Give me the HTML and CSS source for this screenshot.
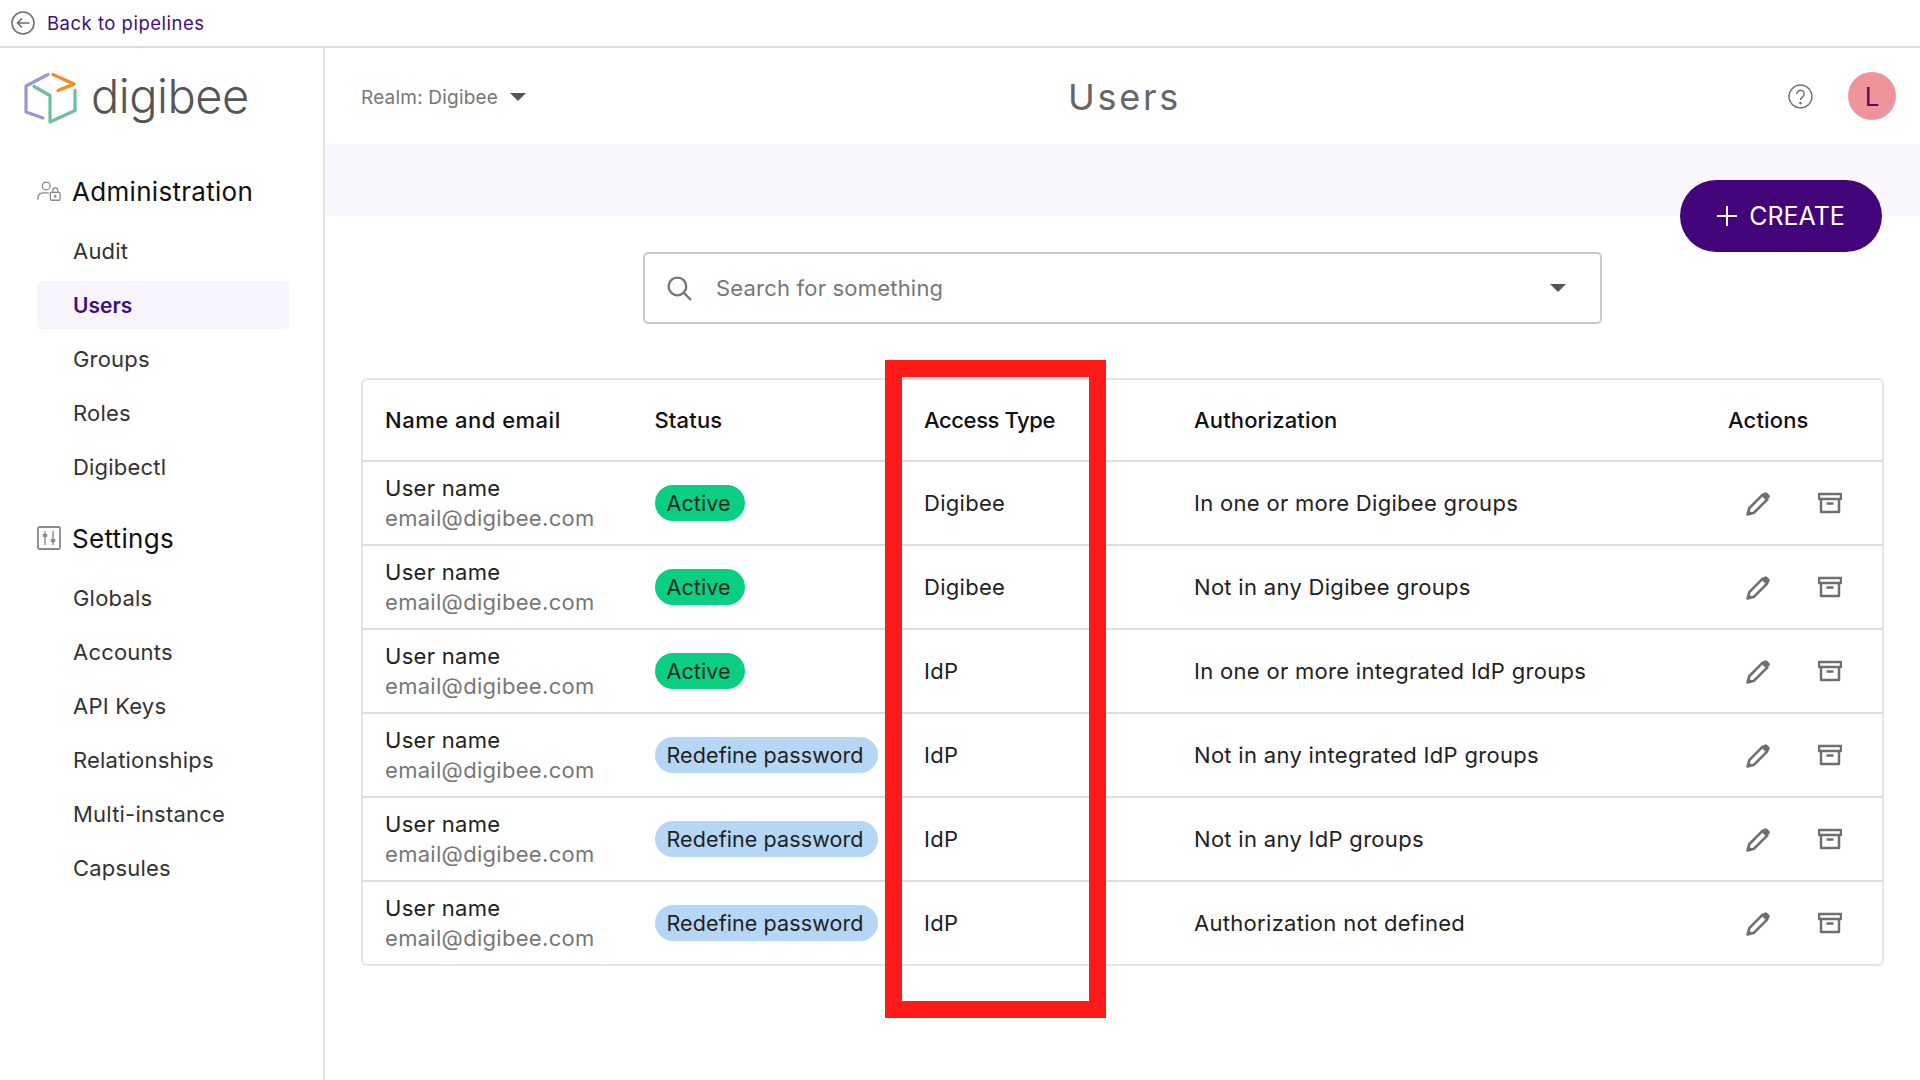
FILE: index.html
```html
<!DOCTYPE html>
<html lang="en">
<head>
  <meta charset="UTF-8" />
  <title>Users - Digibee</title>
  <link rel="stylesheet" href="styles.css">
</head>
<body>
  <div class="topbar">
    <svg class="back-icon" viewBox="0 0 24 24" width="24" height="24" fill="none" stroke="#6f6f6f" stroke-width="1.600"><circle cx="12" cy="12" r="11"/><path d="M18.500 12H6.500M11 7.500L6.500 12l4.500 4.500"/></svg>
    <a class="back-link" href="#">Back to pipelines</a>
  </div>
  <div class="app">
    <aside class="sidebar">
      <div class="logo">
        <svg viewBox="24 72 54 54" width="54" height="54" fill="none" stroke-width="3.200" stroke-linecap="round" stroke-linejoin="round">
          <path d="M48 75.500L26 87v26l17 6" stroke="#9c97d3"/>
          <path d="M53 75.500L74 85l-16 6.500" stroke="#f58a1f"/>
          <path d="M34 87.500L50 96.500V123l25-11.500V91" stroke="#6fc09a"/>
        </svg>
        <span class="logo-text">digibee</span>
      </div>
      <div class="nav-heading">
        <svg viewBox="0 0 26 22" width="24" height="22" fill="none" stroke="#8a8a8a" stroke-width="1.400"><circle cx="10" cy="5.500" r="4.200"/><path d="M1 20.500v-2.500c0-3 3-5 6-5h6"/><rect x="14.500" y="12.500" width="10.500" height="8.500" rx="1"/><path d="M17 12.500v-2a2.800 2.800 0 0 1 5.600 0v2"/><circle cx="19.800" cy="16.800" r=".8" fill="#8a8a8a"/></svg>
        <span>Administration</span>
      </div>
      <nav class="nav-list">
        <a href="#">Audit</a>
        <a href="#" class="active">Users</a>
        <a href="#">Groups</a>
        <a href="#">Roles</a>
        <a href="#">Digibectl</a>
      </nav>
      <div class="nav-heading">
        <svg viewBox="0 0 24 24" width="24" height="24" fill="none" stroke="#8a8a8a" stroke-width="1.800"><rect x="1" y="1" width="22" height="22" rx="1.500"/><path d="M8 5v14M16 5v14" stroke-width="1.400"/><rect x="5.800" y="8" width="4.400" height="3" fill="#8a8a8a" stroke="none"/><rect x="13.800" y="13" width="4.400" height="3" fill="#8a8a8a" stroke="none"/></svg>
        <span>Settings</span>
      </div>
      <nav class="nav-list">
        <a href="#">Globals</a>
        <a href="#">Accounts</a>
        <a href="#">API Keys</a>
        <a href="#">Relationships</a>
        <a href="#">Multi-instance</a>
        <a href="#">Capsules</a>
      </nav>
    </aside>
    <main class="content">
      <header class="page-header">
        <div class="realm">Realm: Digibee <span class="caret"></span></div>
        <h1>Users</h1>
        <div class="header-right">
          <svg viewBox="0 0 24 24" width="25" height="25" fill="none" stroke="#6f6f6f" stroke-width="1.400"><circle cx="12" cy="12" r="11"/><path d="M8.500 9.500a3.500 3.500 0 1 1 5.500 2.900c-1.300.9-2 1.500-2 3"/><circle cx="12" cy="18.300" r=".6" fill="#6f6f6f"/></svg>
          <div class="avatar">L</div>
        </div>
      </header>
      <div class="band"></div>
      <button class="create-btn" type="button">
        <svg viewBox="0 0 20 20" width="20" height="20" stroke="#fff" stroke-width="2"><path d="M10 0v20M0 10h20"/></svg>
        CREATE
      </button>
      <div class="search">
        <svg viewBox="0 0 24 24" width="25" height="25" fill="none" stroke="#777" stroke-width="2.200"><circle cx="10" cy="10" r="8.500"/><path d="M16.200 16.200L23 23"/></svg>
        <span class="search-text">Search for something</span>
        <span class="caret"></span>
      </div>
      <div class="users-table">
        <div class="row head">
          <div class="head-name">Name and email</div><div>Status</div><div class="head-access">Access Type</div><div>Authorization</div><div>Actions</div>
        </div>
        <div class="row">
          <div class="user"><span>User name</span><span class="email">email@digibee.com</span></div>
          <div><span class="badge green">Active</span></div>
          <div>Digibee</div>
          <div>In one or more Digibee groups</div>
          <div class="actions">
            <svg class="icon-edit" viewBox="0 0 24 24"><use href="#pencil"/></svg>
            <svg class="icon-archive" viewBox="0 0 24 24"><use href="#archive"/></svg>
          </div>
        </div>
        <div class="row">
          <div class="user"><span>User name</span><span class="email">email@digibee.com</span></div>
          <div><span class="badge green">Active</span></div>
          <div>Digibee</div>
          <div>Not in any Digibee groups</div>
          <div class="actions">
            <svg class="icon-edit" viewBox="0 0 24 24"><use href="#pencil"/></svg>
            <svg class="icon-archive" viewBox="0 0 24 24"><use href="#archive"/></svg>
          </div>
        </div>
        <div class="row">
          <div class="user"><span>User name</span><span class="email">email@digibee.com</span></div>
          <div><span class="badge green">Active</span></div>
          <div>IdP</div>
          <div>In one or more integrated IdP groups</div>
          <div class="actions">
            <svg class="icon-edit" viewBox="0 0 24 24"><use href="#pencil"/></svg>
            <svg class="icon-archive" viewBox="0 0 24 24"><use href="#archive"/></svg>
          </div>
        </div>
        <div class="row">
          <div class="user"><span>User name</span><span class="email">email@digibee.com</span></div>
          <div><span class="badge blue">Redefine password</span></div>
          <div>IdP</div>
          <div>Not in any integrated IdP groups</div>
          <div class="actions">
            <svg class="icon-edit" viewBox="0 0 24 24"><use href="#pencil"/></svg>
            <svg class="icon-archive" viewBox="0 0 24 24"><use href="#archive"/></svg>
          </div>
        </div>
        <div class="row">
          <div class="user"><span>User name</span><span class="email">email@digibee.com</span></div>
          <div><span class="badge blue">Redefine password</span></div>
          <div>IdP</div>
          <div>Not in any IdP groups</div>
          <div class="actions">
            <svg class="icon-edit" viewBox="0 0 24 24"><use href="#pencil"/></svg>
            <svg class="icon-archive" viewBox="0 0 24 24"><use href="#archive"/></svg>
          </div>
        </div>
        <div class="row">
          <div class="user"><span>User name</span><span class="email">email@digibee.com</span></div>
          <div><span class="badge blue">Redefine password</span></div>
          <div>IdP</div>
          <div>Authorization not defined</div>
          <div class="actions">
            <svg class="icon-edit" viewBox="0 0 24 24"><use href="#pencil"/></svg>
            <svg class="icon-archive" viewBox="0 0 24 24"><use href="#archive"/></svg>
          </div>
        </div>
      </div>
    </main>
  </div>
  <div class="highlight"></div>
  <svg class="defs" width="0" height="0">
    <symbol id="pencil" viewBox="0 0 24 24">
      <path d="M1.500 22.500l1.700-6L16 3.500l4.500 4.500L7.800 20.800z" fill="none" stroke="#6f6f6f" stroke-width="2.500" stroke-linejoin="round"/>
      <path d="M15 4.500l2.500-2.800c.8-.8 1.800-.8 2.600 0l2.200 2.200c.8.800.8 1.800 0 2.600L19.500 9z" fill="#6f6f6f"/>
      <path d="M1.500 22.500l1-4.500 3.500 3.500z" fill="#6f6f6f"/>
    </symbol>
    <symbol id="archive" viewBox="0 0 24 24">
      <path d="M1 3h22v5H1zM3 8v13h18V8M8.500 12.500h7" fill="none" stroke="#6f6f6f" stroke-width="2.500" stroke-linejoin="round"/>
    </symbol>
  </svg>
</body>
</html>
```

FILE: styles.css
```css
body {
  margin: 0;
  background: #fff;
  font-family: 'Inter', 'Open Sans', sans-serif;
  color: #222;
  min-height: 1080px;
  position: relative;
  overflow: hidden;
}
.defs {
  position: absolute;
}
.topbar {
  height: 46px;
  display: flex;
  align-items: center;
  gap: 12px;
  padding-left: 11px;
  border-bottom: 2px solid #ddd;
}
.back-link {
  color: #430f7c;
  font-size: 18.500px;
  letter-spacing: 0.5px;
  text-decoration: none;
}
.app {
  display: flex;
  min-height: 1032px;
}
.sidebar {
  width: 323px;
  border-right: 2px solid #e3e3e3;
  box-sizing: content-box;
  flex-shrink: 0;
}
.logo {
  display: flex;
  align-items: center;
  gap: 13px;
  height: 54px;
  margin: 23px 0 0 24px;
}
.logo-text {
  font-size: 47px;
  font-weight: 300;
  color: #555;
  letter-spacing: -0.5px;
  margin-bottom: 5px;
}
.nav-heading {
  display: flex;
  align-items: center;
  gap: 11px;
  margin-left: 37px;
  height: 40px;
  font-size: 26px;
  letter-spacing: 0.3px;
  color: #111;
}
.sidebar .logo + .nav-heading {
  margin-top: 46px;
}
.nav-list {
  display: flex;
  flex-direction: column;
  width: 252px;
  margin: 16px 0 21px 37px;
}
.nav-list a {
  height: 48px;
  margin-bottom: 6px;
  padding-left: 36px;
  display: flex;
  align-items: center;
  font-size: 22px;
  letter-spacing: 0.2px;
  color: #333;
  text-decoration: none;
  border-radius: 4px;
}
.nav-list a.active {
  background: #f7f4fd;
  color: #430f7c;
  font-size: 21px;
  font-weight: 600;
  letter-spacing: 0;
}
.content {
  flex: 1;
  min-width: 0;
  position: relative;
}
.page-header {
  height: 96px;
  display: flex;
  align-items: center;
  justify-content: space-between;
  padding: 0 24px 0 36px;
  position: relative;
}
.realm {
  color: #777;
  font-size: 19px;
  letter-spacing: 0.2px;
  display: flex;
  align-items: center;
  gap: 5px;
  padding-top: 2px;
}
.page-header h1 {
  position: absolute;
  left: 4px;
  right: 0;
  margin: 0;
  padding-top: 2px;
  text-align: center;
  font-size: 36px;
  font-weight: 400;
  letter-spacing: 2.700px;
  color: #666;
  pointer-events: none;
}
.header-right {
  display: flex;
  align-items: center;
  gap: 35px;
}
.avatar {
  width: 48px;
  height: 48px;
  border-radius: 50%;
  background: #ee959c;
  color: #5c0a5c;
  font-size: 26px;
  display: flex;
  align-items: center;
  justify-content: center;
}
.caret {
  display: inline-block;
  width: 0;
  height: 0;
  margin-left: 7px;
  border-left: 8px solid transparent;
  border-right: 8px solid transparent;
  border-top: 8px solid #555;
}
.band {
  height: 72px;
  background: #f9f7fd;
}
.create-btn {
  position: absolute;
  top: 132px;
  right: 38px;
  width: 202px;
  height: 72px;
  border: none;
  border-radius: 36px;
  background: #43047a;
  color: #fff;
  font-family: inherit;
  font-size: 25px;
  display: flex;
  align-items: center;
  justify-content: center;
  gap: 12px;
}
.search {
  width: 959px;
  height: 72px;
  box-sizing: border-box;
  margin: 36px 0 54px 318px;
  padding: 0 34px 0 22px;
  display: flex;
  align-items: center;
  border: 2px solid #c9c9c9;
  border-radius: 5px;
  color: #777;
  font-size: 22px;
  letter-spacing: 0.2px;
}
.search-text {
  flex: 1;
  margin-left: 24px;
}
.users-table {
  margin: 0 36px;
  border: 2px solid #e3e3e3;
  border-radius: 6px;
  font-size: 22px;
  letter-spacing: 0.3px;
}
.row {
  display: grid;
  grid-template-columns: 269.500px 269.500px 270px 534px 1fr;
  align-items: center;
  height: 82px;
  padding-left: 22px;
  border-top: 2px solid #ddd;
}
.row.head {
  height: 80px;
  border-top: none;
  font-weight: 500;
  letter-spacing: 0.15px;
  color: #111;
}
.row.head .head-name {
  letter-spacing: 0.5px;
}
.row.head .head-access {
  letter-spacing: -0.4px;
}
.user {
  display: flex;
  flex-direction: column;
  gap: 4px;
}
.email {
  color: #777;
}
.badge {
  display: inline-block;
  height: 36px;
  line-height: 36px;
  padding: 0 14px 0 12px;
  border-radius: 18px;
  font-size: 21.500px;
  letter-spacing: 0.1px;
}
.badge.green {
  background: #0acf83;
}
.badge.blue {
  background: #b5d6f4;
}
.actions {
  display: flex;
  align-items: center;
  gap: 47px;
  padding-left: 18px;
}
.icon-edit {
  width: 25px;
  height: 25px;
}
.icon-archive {
  width: 24px;
  height: 24px;
}
.highlight {
  position: absolute;
  left: 885px;
  top: 360px;
  width: 221px;
  height: 658px;
  box-sizing: border-box;
  border: 17px solid #ff1a1a;
}
```
